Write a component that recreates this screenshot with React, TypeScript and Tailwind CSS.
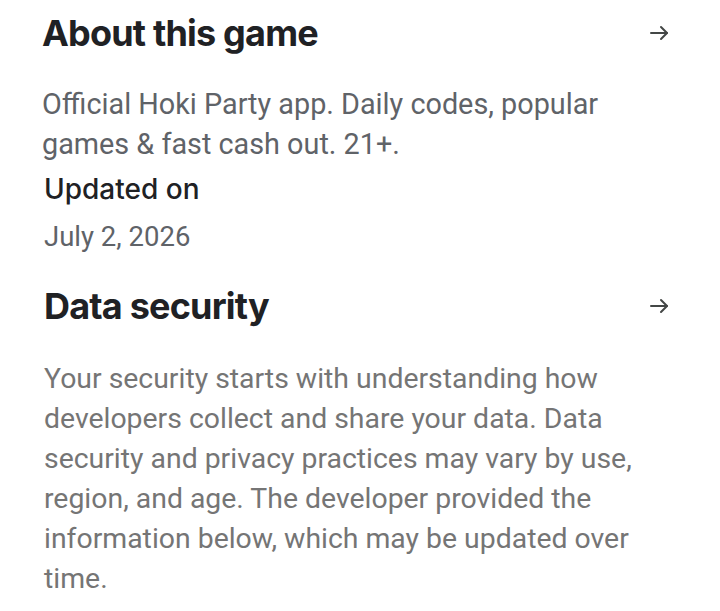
import React from 'react';

function Arrow() {
	return (
		<svg width="24" height="24" viewBox="0 0 24 24" fill="none" stroke="#444746" strokeWidth="2" strokeLinecap="round" strokeLinejoin="round">
			<path d="M4 12h16" />
			<path d="M14 6l6 6-6 6" />
		</svg>
	);
}

function SectionHeader({ title }: { title: string }) {
	return (
		<div className="flex items-center justify-between">
			<h2 className="text-[36px] font-bold tracking-[-0.8px] text-[#202124] leading-[64px]" style={{ fontFamily: 'Inter, "Open Sans", sans-serif' }}>
				{title}
			</h2>
			<div className="pr-[7px]">
				<Arrow />
			</div>
		</div>
	);
}

export default function App() {
	return (
		<div className="w-[720px] h-[611px] bg-white pl-[42px] pr-[42px] pt-[1px]" style={{ fontFamily: 'Roboto, "Liberation Sans", sans-serif' }}>
			<SectionHeader title="About this game" />
			<p className="mt-[19px] text-[28.8px] leading-[40px] text-[#5f6368] w-[600px]">
				Official Hoki Party app. Daily codes, popular games &amp; fast cash out. 21+.
			</p>
			<div className="mt-[5px] pl-[2px] text-[28px] leading-[40px] font-medium text-[#202124]" style={{ fontFamily: 'Inter, sans-serif' }}>
				Updated on
			</div>
			<div className="mt-[8px] pl-[2px] text-[27.5px] leading-[40px] text-[#5f6368]">July 2, 2026</div>
			<div className="mt-[17px] pl-[2px]">
				<SectionHeader title="Data security" />
			</div>
			<p className="mt-[21px] pl-[2px] text-[28.4px] leading-[40px] text-[#757575] w-[604px]">
				Your security starts with understanding how developers collect and share your data. Data security and privacy practices may vary by use, region, and age. The developer provided the information below, which may be updated over time.
			</p>
		</div>
	);
}
